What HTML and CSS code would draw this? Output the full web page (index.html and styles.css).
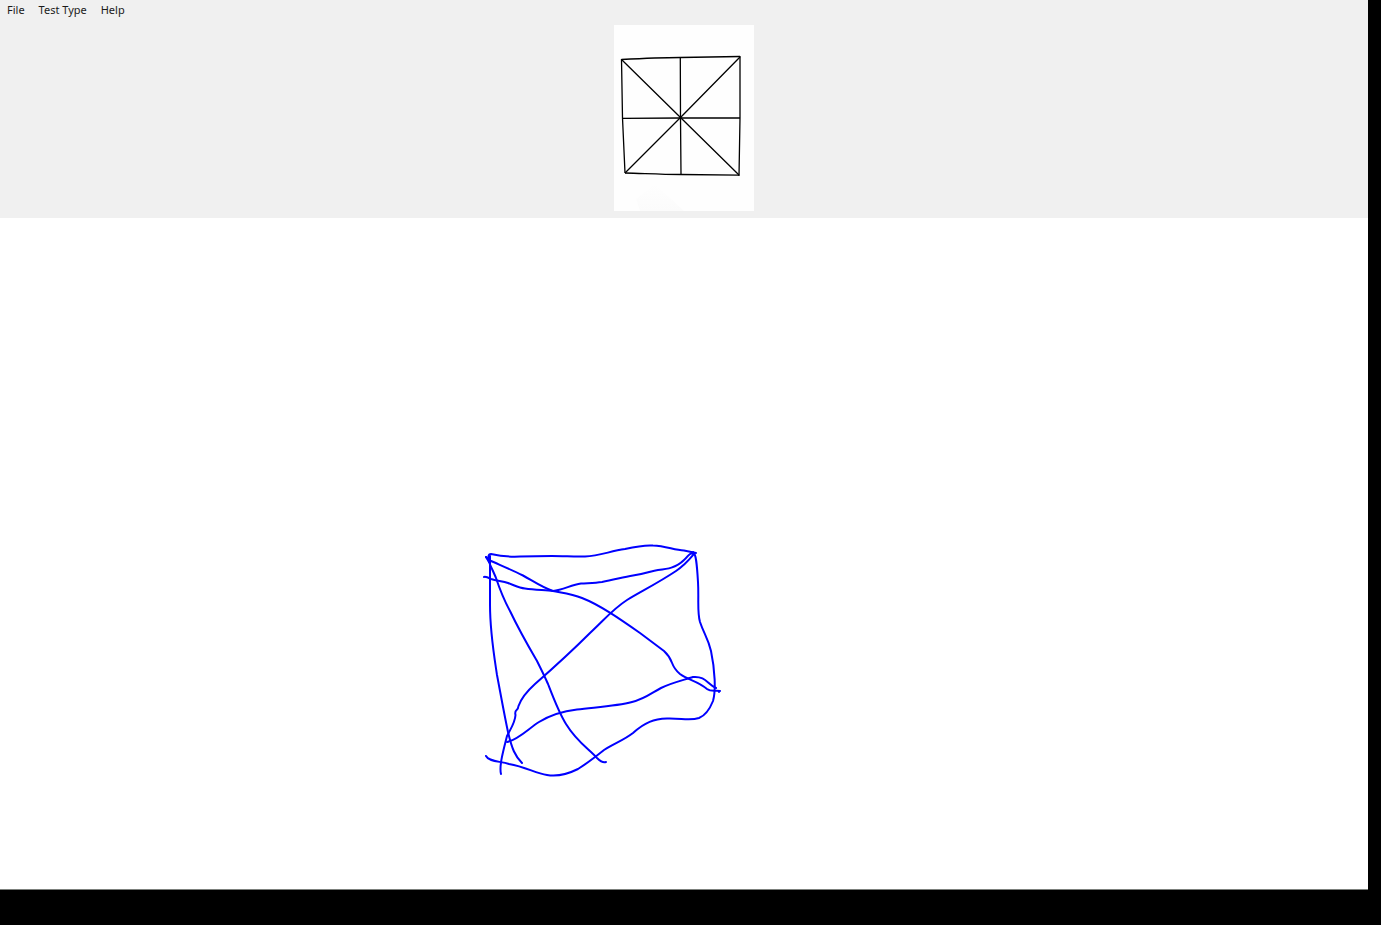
FILE: index.html
```html
<!DOCTYPE html>
<html lang="en">
<head>
<meta charset="utf-8">
<title>Drawing Test</title>
<link rel="stylesheet" href="styles.css">
</head>
<body>
<div class="window">
  <header class="top">
    <nav class="menubar" aria-label="Main menu">
      <button type="button" class="menu-item">File</button>
      <button type="button" class="menu-item">Test Type</button>
      <button type="button" class="menu-item">Help</button>
    </nav>
    <svg class="model" width="140" height="186" viewBox="614 25 140 186" role="img" aria-label="Figure to copy">
      <defs><linearGradient id="shade" x1="0" y1="0" x2="0" y2="1"><stop offset="0" stop-color="#fefefe"/><stop offset="1" stop-color="#fbfbfb"/></linearGradient></defs>
      <path class="shade" d="M636 199L655 184L684 211H640Z"/>
      <g class="model-line">
        <path d="M621.500 59.500C640 58.500 660 57.500 680 57.500L740 56.500"/>
        <path d="M740 56L740 118L739 176"/>
        <path d="M625 173C645 173.500 660 174.500 681 174.500L739 175.200"/>
        <path d="M621.500 59L622.500 118L625 173"/>
        <path d="M622.500 118.300L680 118L740 118"/>
        <path d="M680.300 57.500L680.500 118L681 174.500"/>
        <path d="M622 60L680.500 117.500L739 175"/>
        <path d="M740 57L680.500 117.500L625 173"/>
      </g>
    </svg>
  </header>
  <main class="canvas">
    <svg class="sketch" viewBox="0 218 1368 671" role="img" aria-label="Hand-drawn copy">
      <path d="M489 562C488 557 488 554 491 554C500 556 510 557 520 556.500C535 556 540 556 552 556C565 556 575 557 585 556.500C600 556 610 551 625 549C638 546 646 545 653 545.500C666 546 674 550 684 550.500L696 553"/>
      <path d="M490 556V605C490 632 494 655 497 675C501 696 504 713 508 732C512 749 515 756 522 763"/>
      <path d="M486 557L489 560C500 565 512 570 523 575.500C533 581 543 588 553 591C563 593 572 594 582 598C600 605 620 619 640 633L664 651C675 661 669 665 680 674C688 680 698 681 707 689C711 692 716 690 720 691"/>
      <path d="M486 557L489 562C491 567 494 573 496 578C501 593 504 600 510 611C520 632 530 649 537 661C541 669 545 677 548 684C553 697 559 713 566 724C577 742 589 749 597 758C601 762 603 763 606 762"/>
      <path d="M484 577C485 576 487 577 491 579C497 581 503 581 508 583C516 586 519 588 525 588.500C535 590 545 590 553 591C563 590 571 585 581 583.500C589 583 595 583 602 582C614 580 623 577 633 575.500C645 574 651 571 658 570C667 569 676 568 684 560C689 556 689 552 694 554"/>
      <path d="M694 554C689 560 685 565 676 571C658 583 640 592 627 600C613 609 605 619 590 633C570 653 551 670 535 684C525 693 521 699 518.500 706C518 712 514 709 515.500 715C515 723 511 728 507 736C503 752 499 766 501 774"/>
      <path d="M693 552C696 553 697 565 698 582C699 599 697 612 700 622C704 634 708 638 711 651C715 670 716 691 713 701C709 711 704 716 699 718C690 721 681 718 667 718.500C654 719 645 722 633 733C624 740 615 743 604 750C594 758 586 764 578 769C568 774 559 777 547 775C535 773 526 767 509 764C500 761 489 762 486 756"/>
      <path d="M507 742C518 740 528 729 539 722C552 714 564 711 577 709.500C598 707 617 706 632 702C645 699 653 692 661 688C671 683 684 680 693 677C706 676 707 684 716 688"/>
      <path d="M719 691V692"/>
    </svg>
  </main>
</div>
</body>
</html>
```
FILE: styles.css
```css
* {
  box-sizing: border-box;
}

body {
  margin: 0;
  background: #000;
  font-family: "Noto Sans", sans-serif;
  font-size: 11px;
  color: #1a1a1a;
}

.window {
  display: flex;
  flex-direction: column;
  min-height: 100vh;
  padding: 0 13px 35px 0;
}

.top {
  display: flex;
  flex-direction: column;
  align-items: center;
  gap: 5px;
  padding-bottom: 7px;
  background: #f0f0f0;
}

.menubar {
  display: flex;
  align-self: stretch;
}

.menu-item {
  padding: 0 7px;
  border: 0;
  background: transparent;
  color: inherit;
  font: inherit;
  line-height: 20px;
}

.model {
  display: block;
  background: #fefefe;
}

.shade {
  fill: url(#shade);
}

.model-line {
  fill: none;
  stroke: #000;
  stroke-width: 1.3;
}

.canvas {
  display: flex;
  flex: 1;
  background: #fff;
  border-bottom: 1px solid #7c807c;
}

.sketch {
  flex: 1;
  min-width: 0;
  fill: none;
  stroke: #0000ff;
  stroke-width: 2;
  stroke-linecap: round;
  stroke-linejoin: round;
}
```
